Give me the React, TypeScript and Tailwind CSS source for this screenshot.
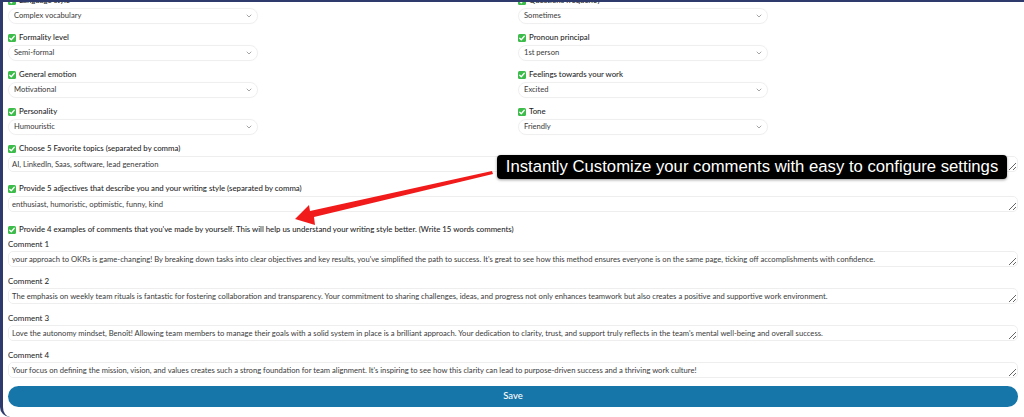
import type { ReactNode } from 'react';
import { ChevronDown } from 'lucide-react';

const selects: [string, string][] = [
  ['Language style', 'Complex vocabulary'],
  ['Questions frequency', 'Sometimes'],
  ['Formality level', 'Semi-formal'],
  ['Pronoun principal', '1st person'],
  ['General emotion', 'Motivational'],
  ['Feelings towards your work', 'Excited'],
  ['Personality', 'Humouristic'],
  ['Tone', 'Friendly'],
];

const comments = [
  "your approach to OKRs is game-changing! By breaking down tasks into clear objectives and key results, you've simplified the path to success. It's great to see how this method ensures everyone is on the same page, ticking off accomplishments with confidence.",
  'The emphasis on weekly team rituals is fantastic for fostering collaboration and transparency. Your commitment to sharing challenges, ideas, and progress not only enhances teamwork but also creates a positive and supportive work environment.',
  "Love the autonomy mindset, Benoît! Allowing team members to manage their goals with a solid system in place is a brilliant approach. Your dedication to clarity, trust, and support truly reflects in the team's mental well-being and overall success.",
  "Your focus on defining the mission, vision, and values creates such a strong foundation for team alignment. It's inspiring to see how this clarity can lead to purpose-driven success and a thriving work culture!",
];

function Check() {
  return (
    <svg width="8" height="8" viewBox="0 0 16 16" className="shrink-0">
      <rect width="16" height="16" rx="3" fill="#3dbb4b" />
      <path
        d="M3.5 8.5l3 3 6-7"
        stroke="#fff"
        strokeWidth="2.6"
        fill="none"
        strokeLinecap="round"
        strokeLinejoin="round"
      />
    </svg>
  );
}

function Label({ children }: { children: ReactNode }) {
  return (
    <div className="flex h-[12px] items-center gap-[3px] text-[7.8px] font-medium text-[#1f1f1f]">
      <Check />
      <span>{children}</span>
    </div>
  );
}

function SelectField({ label, value }: { label: string; value: string }) {
  return (
    <div className="mb-[8px]">
      <Label>{label}</Label>
      <div className="mt-[1px] flex h-[16px] w-[250px] items-center justify-between rounded-full border border-[#efefef] pl-[5px] pr-[4px] text-[7.6px] text-[#3a3a3a] shadow-[0_0_1px_rgba(0,0,0,0.06)]">
        <span>{value}</span>
        <ChevronDown size={8} strokeWidth={2} className="text-[#777]" />
      </div>
    </div>
  );
}

function Area({ value }: { value: string }) {
  return (
    <textarea
      readOnly
      rows={1}
      defaultValue={value}
      className="mt-[1px] block h-[16px] w-full overflow-hidden rounded-[5px] border border-[#eeeeee] px-[3px] py-[3px] text-[7.65px] leading-[9px] text-[#3a3a3a] outline-none"
    />
  );
}

export default function App() {
  return (
    <div className="relative h-[417px] w-[1024px] overflow-hidden rounded-bl-[10px] border-l-[3px] border-t-2 border-[#2e3a6b] bg-white font-[Lato,sans-serif]">
      <div className="-mt-[7px] pl-[5px] pr-[6px]">
        <div className="grid grid-cols-2 gap-x-[10px]">
          {selects.map(([l, v]) => (
            <SelectField key={l} label={l} value={v} />
          ))}
        </div>

        <div className="mb-[11px]">
          <Label>Choose 5 Favorite topics (separated by comma)</Label>
          <Area value="AI, LinkedIn, Saas, software, lead generation" />
        </div>

        <div className="mb-[12px]">
          <Label>Provide 5 adjectives that describe you and your writing style (separated by comma)</Label>
          <Area value="enthusiast, humoristic, optimistic, funny, kind" />
        </div>

        <Label>
          Provide 4 examples of comments that you've made by yourself. This will help us understand your
          writing style better. (Write 15 words comments)
        </Label>
        <div className="mt-[2px]">
          {comments.map((c, i) => (
            <div key={i} className="mb-[8px]">
              <div className="flex h-[12px] items-center text-[8px] text-[#222]">Comment {i + 1}</div>
              <Area value={c} />
            </div>
          ))}
        </div>

        <button className="mt-[5px] flex h-[21px] w-full items-center justify-center rounded-full bg-[#1776a9] text-[9.5px] font-medium text-white">
          Save
        </button>
      </div>

      <svg
        width="1024"
        height="417"
        className="pointer-events-none absolute -left-[3px] -top-[2px]"
      >
        <polygon
          points="295,219 309,205 310,211 492,171 493,174 314,217 315,225"
          fill="#f21b1b"
        />
      </svg>

      <div className="absolute left-[494px] top-[153px] flex h-[24px] w-[510px] items-center justify-center whitespace-nowrap rounded-[4px] bg-black font-['Liberation_Sans',Arial,sans-serif] text-[16.7px] leading-none text-white shadow-[0_1px_3px_rgba(0,0,0,0.4)]">
        Instantly Customize your comments with easy to configure settings
      </div>
    </div>
  );
}
